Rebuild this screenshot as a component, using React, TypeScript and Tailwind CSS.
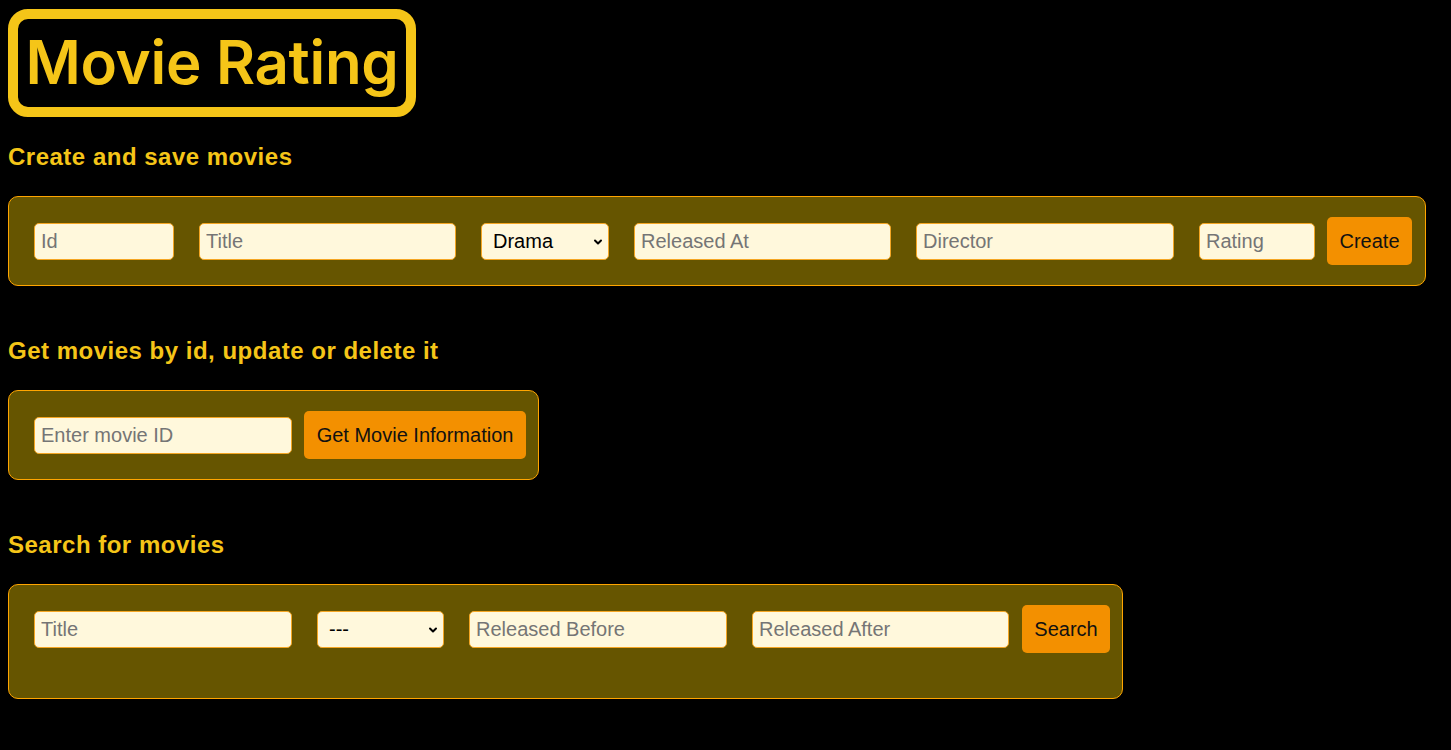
import { ChevronDown } from 'lucide-react';

const inputCls =
  'h-[37px] rounded-[5px] border border-[#f5a623] bg-[#fff8dc] px-[6px] text-[20px] text-black placeholder:text-[#757575] outline-none';

const btnCls =
  'h-[48px] rounded-[5px] bg-[#f39000] text-[20px] text-[#111] cursor-pointer';

const Select = ({ value, options, width }: { value: string; options: string[]; width: string }) => {
  return (
    <div className={`relative mr-[25px] ${width}`}>
      <select defaultValue={value} className={`${inputCls} w-full appearance-none pl-[11px]`}>
        {options.map((o) => (
          <option key={o}>{o}</option>
        ))}
      </select>
      <ChevronDown
        className="pointer-events-none absolute right-[5px] top-[13px] size-[12px] text-black"
        strokeWidth={4}
      />
    </div>
  );
};

const Heading = ({ children, className = '' }: { children: string; className?: string }) => (
  <h2 className={`text-[24px] leading-[28px] font-bold tracking-[0.5px] text-[#f5c518] ${className}`}>
    {children}
  </h2>
);

const App = () => {
  return (
    <div className="min-h-[750px] bg-black p-2 pt-[9px] font-[family-name:'Liberation_Sans',Arial,sans-serif]">
      <div className="flex h-[108px] w-[408px] items-center justify-center rounded-[20px] border-[10px] border-[#f5c518]">
        <span className="-mt-[3px] font-[family-name:'Inter',sans-serif] text-[60px] font-semibold leading-none tracking-[-0.3px] text-[#f5c518]">
          Movie Rating
        </span>
      </div>

      <Heading className="mt-[26px]">Create and save movies</Heading>
      <div className="mt-[25px] flex w-fit items-center rounded-[10px] border border-[#ffa500] bg-[#665500] py-5 pl-[25px] pr-[13px]">
        <input placeholder="Id" className={`${inputCls} mr-[25px] w-[140px]`} />
        <input placeholder="Title" className={`${inputCls} mr-[25px] w-[257px]`} />
        <Select value="Drama" options={['Drama', 'Comedy', 'Action', 'Horror', 'Romance']} width="w-[128px]" />
        <input placeholder="Released At" className={`${inputCls} mr-[25px] w-[257px]`} />
        <input placeholder="Director" className={`${inputCls} mr-[25px] w-[258px]`} />
        <input placeholder="Rating" className={`${inputCls} mr-[12px] w-[116px]`} />
        <button className={`${btnCls} w-[85px]`}>Create</button>
      </div>

      <Heading className="mt-[51px]">Get movies by id, update or delete it</Heading>
      <div className="mt-[25px] flex w-fit items-center rounded-[10px] border border-[#ffa500] bg-[#665500] py-5 pl-[25px] pr-[12px]">
        <input placeholder="Enter movie ID" className={`${inputCls} mr-[12px] w-[258px]`} />
        <button className={`${btnCls} w-[222px]`}>Get Movie Information</button>
      </div>

      <Heading className="mt-[51px]">Search for movies</Heading>
      <div className="mt-[25px] flex w-fit items-center rounded-[10px] border border-[#ffa500] bg-[#665500] pt-5 pb-[45px] pl-[25px] pr-[12px]">
        <input placeholder="Title" className={`${inputCls} mr-[25px] w-[258px]`} />
        <Select value="---" options={['---', 'Drama', 'Comedy', 'Action', 'Horror']} width="w-[127px]" />
        <input placeholder="Released Before" className={`${inputCls} mr-[25px] w-[258px]`} />
        <input placeholder="Released After" className={`${inputCls} mr-[13px] w-[257px]`} />
        <button className={`${btnCls} w-[88px]`}>Search</button>
      </div>
    </div>
  );
};

export default App;
